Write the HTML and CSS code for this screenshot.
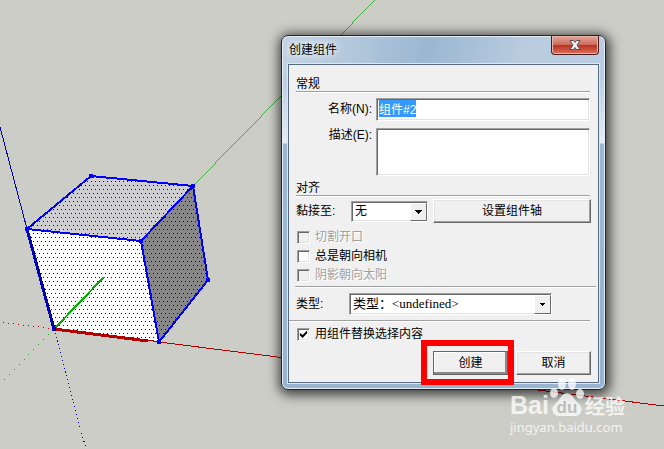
FILE: index.html
```
<!DOCTYPE html>
<html lang="zh-CN">
<head>
    <meta charset="UTF-8">
    <meta name="viewport" content="width=device-width, initial-scale=1.0">
    <title>创建组件</title>
    <link rel="stylesheet" href="styles.css">
</head>
<body>
    <svg class="scene" aria-hidden="true" shape-rendering="crispEdges">
        <defs>
            <pattern id="dots" width="4" height="8" patternUnits="userSpaceOnUse" shape-rendering="geometricPrecision">
                <rect x="1" y="1" width="1" height="1" fill="#0000a0"/>
                <rect x="3" y="5" width="1" height="1" fill="#0000a0"/>
            </pattern>
        </defs>
        <!-- axes -->
        <path d="M0 127L27 229" stroke="#0000b4"/>
        <path d="M193 186L375 0" stroke="#00a800" stroke-width=".7"/>
        <path d="M159 342L664 406" stroke="#b40000"/>
        <path d="M54 329L0 322" stroke="#b40000" stroke-dasharray="1 4"/>
        <path d="M54 329L2 382" stroke="#00a800" stroke-width=".8" stroke-dasharray="1 6"/>
        <path d="M54 329L86 449" stroke="#0000b4" stroke-dasharray="1 3"/>
        <!-- cube faces -->
        <path d="M27 229L91 176L193 186L141 241Z" fill="#cfcfd1"/>
        <path d="M27 229L141 241L159 342L54 329Z" fill="#ffffff"/>
        <path d="M141 241L193 186L208 280L159 342Z" fill="#878787"/>
        <path d="M27 229L91 176L193 186L208 280L159 342L54 329Z" fill="url(#dots)"/>
        <g fill="none" stroke="#0000ff" stroke-width="2">
            <path d="M27 229L91 176L193 186L208 280L159 342L141 241L27 229M141 241L193 186"/>
        </g>
        <path d="M54 329L104 277" stroke="#00b000" stroke-width="2"/>
        <path d="M54 329L27 229" stroke="#0000b4" stroke-width="3"/>
        <path d="M54 329L148 341" stroke="#b40000" stroke-width="3"/>
        <path d="M148 340L159 342" stroke="#b40000"/>
        <g fill="#0000ff">
            <rect x="25" y="227" width="4" height="4"/>
            <rect x="89" y="174" width="4" height="4"/>
            <rect x="191" y="184" width="4" height="4"/>
            <rect x="139" y="239" width="4" height="4"/>
            <rect x="206" y="278" width="4" height="4"/>
            <rect x="157" y="340" width="4" height="4"/>
            <rect x="52" y="327" width="4" height="4" fill="#0000b4"/>
        </g>
    </svg>

    <form class="dialog" role="dialog" aria-labelledby="dialog-title">
        <div class="titlebar">
            <h1 id="dialog-title">创建组件</h1>
            <button type="button" class="close" aria-label="关闭">
                <svg width="12" height="10" viewBox="0 0 12 10">
                    <path d="M1 .5H4.500L6 2.500L7.500 .5H11L8 5L11 9.500H7.500L6 7.500L4.500 9.500H1L4 5Z" fill="#f4f4f4" stroke="#4b4f5e"/>
                </svg>
            </button>
        </div>

        <div class="client">
            <h2>常规</h2>
            <div class="field field-name">
                <label for="name">名称(N):</label>
                <input type="text" id="name" value="组件#2" autocomplete="off" spellcheck="false">
            </div>
            <div class="field field-desc">
                <label for="desc">描述(E):</label>
                <textarea id="desc"></textarea>
            </div>

            <h2>对齐</h2>
            <div class="glue">
                <label for="glue">黏接至:</label>
                <div class="select select-small">
                    <select id="glue"><option>无</option></select>
                    <svg class="arrow" viewBox="0 0 7 4" shape-rendering="crispEdges"><path d="M0 0H7L3.500 4Z"/></svg>
                </div>
                <button type="button" class="btn btn-wide">设置组件轴</button>
            </div>

            <div class="checks">
                <label class="check disabled"><input type="checkbox" disabled>切割开口</label>
                <label class="check"><input type="checkbox">总是朝向相机</label>
                <label class="check disabled"><input type="checkbox" disabled>阴影朝向太阳</label>
            </div>

            <div class="type">
                <label for="type">类型:</label>
                <div class="select select-type">
                    <select id="type"><option>类型：&lt;undefined&gt;</option></select>
                    <svg class="arrow" viewBox="0 0 7 4" shape-rendering="crispEdges"><path d="M1 0H6V1L3.500 4L1 1Z"/></svg>
                </div>
            </div>

            <div class="replace">
                <label class="check"><input type="checkbox" checked>用组件替换选择内容</label>
            </div>

            <div class="actions">
                <div class="marked">
                    <button type="submit" class="btn btn-default">创建</button>
                </div>
                <button type="button" class="btn">取消</button>
            </div>
        </div>
    </form>

    <div class="watermark">
        <div class="brand">
            <span class="brand-latin">Bai</span>
            <svg class="paw" width="36" height="40" viewBox="0 0 36 40">
                <ellipse cx="5" cy="16" rx="4" ry="5"/>
                <ellipse cx="13" cy="7" rx="4" ry="6"/>
                <ellipse cx="23" cy="7" rx="4" ry="6"/>
                <ellipse cx="31" cy="17" rx="4" ry="5"/>
                <path d="M18 16C22 16 24 20 27 24C31 28 34 30 32 35C30 40 25 39 18 39C11 39 6 40 4 35C2 30 5 28 9 24C12 20 14 16 18 16Z"/>
                <text x="18" y="36" text-anchor="middle">du</text>
            </svg>
            <span class="brand-cn">经验</span>
        </div>
        <div class="site">jingyan.baidu.com</div>
    </div>

    <script>
        // the name is selected when the dialog opens
        const nameInput = document.getElementById('name');
        nameInput.focus();
        nameInput.select();
    </script>
</body>
</html>
```
FILE: styles.css
```
:root {
    --scene: #cdcdc8;
    --face: #f0f0f0;
    --shade: #a0a0a0;
    --dark: #696969;
    --light: #e3e3e3;
}

* {
    box-sizing: border-box;
}

body {
    margin: 0;
    min-height: 100vh;
    position: relative;
    overflow: hidden;
    background: var(--scene);
    color: #000;
    font: 12px/14px "Liberation Sans", "Noto Sans CJK SC", sans-serif;
}

input, textarea, select, button {
    font: inherit;
    color: inherit;
    margin: 0;
    border-radius: 0;
    outline: none;
}

.scene {
    position: absolute;
    inset: 0;
    width: 100%;
    height: 100%;
}

/* window frame */
.dialog {
    position: absolute;
    left: 281px;
    top: 35px;
    width: 325px;
    padding: 0 6px 6px;
    border: 1px solid #20262e;
    border-radius: 7px;
    background:
        linear-gradient(100deg, #c3d3e3 0, #b4c9dd 20%, #9bb7d1 45%, #bacce0 75%, #b9cde2 100%) top / 100% 40px no-repeat,
        linear-gradient(#b9cde2 40px, #e6edf4 107px, #9ab7d2 108px, #98b4d0);
    box-shadow: inset 0 0 0 1px #e4eef8, 1px 2px 12px 3px rgba(0, 0, 0, 0.7);
}

.titlebar {
    display: flex;
    justify-content: space-between;
    align-items: flex-start;
    height: 28px;
}

.titlebar h1 {
    margin: 7px 0 0 1px;
    font-size: 12px;
    font-weight: normal;
    text-shadow: 0 0 6px #fff, 0 0 8px #fff;
}

.close {
    display: flex;
    align-items: center;
    justify-content: center;
    width: 48px;
    height: 19px;
    padding: 0;
    border: 1px solid #4b1a1a;
    border-top: 0;
    border-radius: 0 0 4px 4px;
    background: linear-gradient(#e3a498, #cf6b5c 48%, #b8301c 50%, #d9705c);
    box-shadow: inset 0 0 0 1px #eab5ab;
}

.client {
    padding: 12px 7px 7px;
    border: 1px solid #566b80;
    background: var(--face);
    box-shadow: 0 0 0 1px #dce8f3;
}

.client h2 {
    margin: 0 1px 3px 0;
    border-bottom: 1px solid var(--shade);
    box-shadow: 0 1px #fff;
    font-size: 12px;
    font-weight: normal;
}

.field {
    display: flex;
    margin-right: 1px;
}

.field-name {
    margin-top: 6px;
    margin-bottom: 7px;
}

.field-desc {
    margin-bottom: 5px;
}

.field label {
    width: 76px;
    margin-right: 4px;
    text-align: right;
}

.field-name label {
    padding-top: 4px;
}

.field input,
.field textarea {
    flex: 1;
    min-width: 0;
    border: 1px solid;
    border-color: var(--shade) #fff #fff var(--shade);
    background: #fff;
    box-shadow: inset 1px 1px var(--dark), inset -1px -1px var(--light);
}

.field input {
    height: 23px;
    padding: 2px 2px 5px;
    line-height: 14px;
}

.field input::selection {
    background: #3399ff;
    color: #fff;
}

.field textarea {
    display: block;
    height: 48px;
    padding: 2px;
    resize: none;
}

.glue {
    display: flex;
    align-items: center;
}

.glue label {
    width: 55px;
}

/* drop-down lists */
.select {
    position: relative;
}

.select select {
    width: 100%;
    height: 100%;
    padding: 0 18px 0 3px;
    border: 1px solid;
    border-color: var(--shade) #fff #fff var(--shade);
    background: #fff;
    box-shadow: inset 1px 1px var(--dark), inset -1px -1px var(--light);
    appearance: none;
}

.arrow {
    position: absolute;
    top: 2px;
    right: 1px;
    width: 17px;
    height: calc(100% - 3px);
    padding: 4px;
    border: 1px solid;
    border-color: #fff var(--dark) var(--dark) #fff;
    background: var(--face);
    pointer-events: none;
}

.select-small {
    width: 77px;
    height: 21px;
    margin-right: 5px;
}

.select-type {
    width: 203px;
    height: 22px;
}

.select-type select {
    font: 13px/16px "Liberation Serif", "Noto Sans CJK SC", serif;
}

.btn {
    width: 75px;
    height: 24px;
    padding: 0;
    border: 1px solid;
    border-color: #fff var(--dark) var(--dark) #fff;
    background: var(--face);
    box-shadow: inset -1px -1px var(--shade), inset 1px 1px var(--light);
}

.btn-wide {
    flex: 1;
}

.btn-default {
    border-color: #646464;
    box-shadow: inset -2px -2px #8a8a8a, inset 1px 1px #fff;
}

.checks {
    display: flex;
    flex-direction: column;
    gap: 5px;
    padding: 7px 0 4px;
}

.check {
    display: flex;
    align-items: center;
    gap: 5px;
    padding-left: 1px;
}

.check input {
    display: grid;
    place-content: center;
    width: 13px;
    height: 13px;
    border: 1px solid;
    border-color: var(--shade) #fff #fff var(--shade);
    background: #fff;
    box-shadow: inset 1px 1px var(--dark), inset -1px -1px var(--light);
    appearance: none;
}

.check input:checked::before {
    content: "";
    width: 9px;
    height: 9px;
    background: #000;
    clip-path: polygon(10% 35%, 40% 62%, 90% 10%, 90% 42%, 40% 95%, 10% 68%);
}

.disabled {
    color: #a0a0a0;
    text-shadow: 1px 1px #fff;
}

.check.disabled input {
    background: var(--face);
}

.type {
    display: flex;
    align-items: center;
    margin: 0 -5px 0 -1px;
    padding: 6px 0 5px 1px;
    border-top: 1px solid var(--shade);
    box-shadow: inset 0 1px #fff;
}

.type label {
    width: 53px;
}

.replace {
    margin: 0 1px 0 -7px;
    padding: 6px 0 10px 7px;
    border-top: 1px solid var(--shade);
    box-shadow: inset 0 1px #fff;
}

.actions {
    display: flex;
    justify-content: flex-end;
    gap: 8px;
}

.marked {
    position: relative;
}

/* red frame around the create button */
.marked::after {
    content: "";
    position: absolute;
    inset: -11px -6px -10px -12px;
    border: 6px solid #ff0000;
    pointer-events: none;
}

.watermark {
    position: absolute;
    left: 510px;
    top: 377px;
    color: #fff;
    opacity: 0.75;
}

.brand {
    display: flex;
    align-items: flex-end;
    height: 40px;
}

.brand-latin {
    font-size: 25px;
    font-weight: bold;
    line-height: 24px;
}

.paw {
    fill: #fff;
}

.paw text {
    fill: #b9b9b6;
    font-size: 17px;
    font-weight: bold;
}

.brand-cn {
    font-size: 20px;
    font-weight: bold;
    line-height: 20px;
}

.site {
    font: 13px/20px "Noto Sans", sans-serif;
}
```
